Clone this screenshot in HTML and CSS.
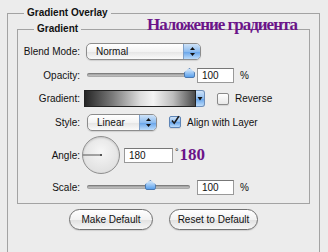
FILE: index.html
```html
<!DOCTYPE html>
<html lang="en">
<head>
  <meta charset="UTF-8">
  <title>Gradient Overlay</title>
  <link rel="stylesheet" href="styles.css">
</head>
<body>
  <fieldset class="panel">
    <legend>Gradient Overlay</legend>
    <span class="note note-title">Наложение градиента</span>

    <fieldset class="group">
      <legend>Gradient</legend>

      <div class="row row-blend">
        <span class="lbl">Blend Mode:</span>
        <div class="ctl">
          <div class="select select-blend">
            <span class="select-text">Normal</span>
            <span class="stepper">
              <svg width="17" height="15" viewBox="0 0 17 15"><polygon points="6,6 11,6 8.5,3" fill="#111"/><polygon points="6,9 11,9 8.5,12" fill="#111"/></svg>
            </span>
          </div>
        </div>
      </div>

      <div class="row row-opacity">
        <span class="lbl">Opacity:</span>
        <div class="ctl">
          <div class="slider">
            <span class="thumb" style="left: 99%"></span>
          </div>
          <span class="field">100</span>
          <span class="unit">%</span>
        </div>
      </div>

      <div class="row row-gradient">
        <span class="lbl">Gradient:</span>
        <div class="ctl">
          <div class="swatch">
            <span class="swatch-fill"></span>
            <span class="swatch-btn">
              <svg width="8" height="15" viewBox="0 0 8 15"><polygon points="1.5,6 6.5,6 4,9.5" fill="#111"/></svg>
            </span>
          </div>
          <span class="check"></span>
          <span class="check-text">Reverse</span>
        </div>
      </div>

      <div class="row row-style">
        <span class="lbl">Style:</span>
        <div class="ctl">
          <div class="select select-style">
            <span class="select-text">Linear</span>
            <span class="stepper">
              <svg width="17" height="15" viewBox="0 0 17 15"><polygon points="6,6 11,6 8.5,3" fill="#111"/><polygon points="6,9 11,9 8.5,12" fill="#111"/></svg>
            </span>
          </div>
          <span class="check checked">
            <svg width="13" height="13" viewBox="0 0 13 13"><path d="M2.5 6.5 L5.5 10 L11.5 1" fill="none" stroke="#1a1a1a" stroke-width="2"/></svg>
          </span>
          <span class="check-text">Align with Layer</span>
        </div>
      </div>

      <div class="row row-angle">
        <span class="lbl">Angle:</span>
        <div class="ctl">
          <div class="dial">
            <svg width="38" height="38" viewBox="0 0 38 38">
              <line x1="1" y1="19" x2="19" y2="19" stroke="#555" stroke-width="1"/>
              <rect x="18" y="18" width="2" height="2" fill="#555"/>
            </svg>
          </div>
          <span class="field field-angle">180</span>
          <span class="degree">°</span>
          <span class="note note-angle">180</span>
        </div>
      </div>

      <div class="row row-scale">
        <span class="lbl">Scale:</span>
        <div class="ctl">
          <div class="slider">
            <span class="thumb" style="left: 61%"></span>
          </div>
          <span class="field">100</span>
          <span class="unit">%</span>
        </div>
      </div>
    </fieldset>

    <div class="buttons">
      <button class="btn btn-make">Make Default</button>
      <button class="btn btn-reset">Reset to Default</button>
    </div>
  </fieldset>
</body>
</html>
```

FILE: styles.css
```css
* {
  box-sizing: border-box;
  margin: 0;
  padding: 0;
}
body {
  background: #ececec;
  font-family: "Liberation Sans", Arial, sans-serif;
  font-size: 10px;
  color: #111;
  padding: 6px 0 0 7px;
  overflow: hidden;
}

/* outer panel */
.panel {
  position: relative;
  width: 313px;
  height: 270px;
  border: 1px solid #a3a3a3;
  padding: 0 9px;
}
.panel > legend {
  margin-left: 7px;
  padding: 0 3px;
  font-weight: bold;
  line-height: 14px;
}
.note {
  font-family: "Liberation Serif", "Times New Roman", serif;
  color: #6b1489;
}
.note-title {
  position: absolute;
  left: 139px;
  top: -5px;
  font-size: 17px;
  letter-spacing: -1px;
  line-height: 20px;
  font-weight: bold;
}

/* inner group */
.group {
  margin-top: 2px;
  border: 1px solid #a3a3a3;
  padding: 4px 0 5px;
}
.group > legend {
  margin-left: 16px;
  padding: 0 3px;
  font-weight: bold;
  line-height: 14px;
}
.row {
  display: grid;
  grid-template-columns: 62px 1fr;
  column-gap: 7px;
  align-items: center;
}
.row-blend { height: 23px; }
.row-opacity { height: 24px; }
.row-gradient { height: 23px; }
.row-style { height: 24px; }
.row-angle { height: 42px; }
.row-scale { height: 22px; }
.lbl {
  text-align: right;
}
.ctl {
  display: flex;
  align-items: center;
}

/* popup selects */
.select {
  display: flex;
  height: 17px;
  border: 1px solid #8c8c8c;
  border-radius: 5px;
  background: linear-gradient(#ffffff, #f3f3f3 50%, #e6e6e6 55%, #fafafa);
  overflow: hidden;
  box-shadow: 0 1px 1px rgba(0,0,0,0.12);
}
.select-blend { width: 115px; margin-left: -1px; }
.select-style { width: 70px; }
.select-text {
  flex: 1;
  padding-left: 9px;
  line-height: 15px;
}
.stepper {
  width: 17px;
  border-left: 1px solid #7e9fc8;
  background: linear-gradient(#cfe3f8, #8dbcef 50%, #6aa6ea 55%, #bcdcfb);
}

/* sliders */
.slider {
  position: relative;
  width: 103px;
  height: 4px;
  border-radius: 2px;
  background: linear-gradient(#8c8c8c, #b8b8b8 60%, #d0d0d0);
  box-shadow: inset 0 0 0 1px rgba(0,0,0,0.15);
}
.thumb {
  position: absolute;
  top: -5px;
  width: 11px;
  height: 10px;
  margin-left: -5px;
  background: linear-gradient(#d6e9fc, #5aa0ec);
  border: 1px solid #4a78b0;
  border-radius: 5px 5px 2px 2px;
  clip-path: polygon(50% 0, 100% 45%, 100% 100%, 0 100%, 0 45%);
}
.field {
  height: 15px;
  width: 37px;
  margin-left: 7px;
  border: 1px solid #999;
  border-top-color: #777;
  background: #fff;
  padding-left: 4px;
  line-height: 13px;
}
.unit {
  margin-left: 6px;
}

/* gradient swatch */
.swatch {
  display: flex;
  height: 17px;
  margin-left: -3px;
}
.swatch-fill {
  width: 112px;
  border: 1px solid #222;
  background: linear-gradient(90deg, #262626, #7a7a7a 25%, #dcdcdc 50%, #f4f4f4 62%, #bdbdbd 80%, #4a4a4a);
}
.swatch-btn {
  width: 9px;
  border: 1px solid #6f8fb8;
  border-left: none;
  border-radius: 0 3px 3px 0;
  background: linear-gradient(#cfe3f8, #8dbcef 50%, #6aa6ea 55%, #bcdcfb);
}

/* checkboxes */
.check {
  display: flex;
  width: 12px;
  height: 12px;
  margin-left: 12px;
  border: 1px solid #8a8a8a;
  border-radius: 2px;
  background: linear-gradient(#ffffff, #e8e8e8);
  box-shadow: 0 1px 1px rgba(0,0,0,0.1);
}
.check.checked {
  border-color: #5d84b6;
  background: linear-gradient(#cfe3f8, #8dbcef 50%, #6aa6ea 55%, #bcdcfb);
}
.check svg {
  margin: -3px 0 0 0;
}
.check-text {
  margin-left: 6px;
}

/* angle */
.dial {
  width: 38px;
  height: 38px;
  margin-left: -5px;
  border: 1px solid #8f8f8f;
  border-radius: 50%;
  background: radial-gradient(circle at 50% 40%, #f6f6f6, #e2e2e2 70%, #cfcfcf);
  box-shadow: inset 0 1px 2px rgba(0,0,0,0.15);
}
.dial svg {
  display: block;
  margin: -1px;
}
.field-angle {
  width: 49px;
  margin-left: 4px;
}
.degree {
  margin: -7px 0 0 2px;
  font-size: 9px;
}
.note-angle {
  margin-left: 1px;
  font-size: 17px;
  font-weight: bold;
  line-height: 16px;
}

/* buttons */
.buttons {
  display: flex;
  justify-content: center;
  gap: 16px;
  margin-top: 5px;
}
.btn {
  height: 21px;
  border: 1px solid #707070;
  border-radius: 11px;
  background: linear-gradient(#ffffff, #f2f2f2 50%, #e2e2e2 55%, #f7f7f7);
  font-family: "Liberation Sans", Arial, sans-serif;
  font-size: 10px;
  color: #111;
  box-shadow: 0 1px 1px rgba(0,0,0,0.12);
}
.btn-make { width: 84px; }
.btn-reset { width: 89px; }
```
